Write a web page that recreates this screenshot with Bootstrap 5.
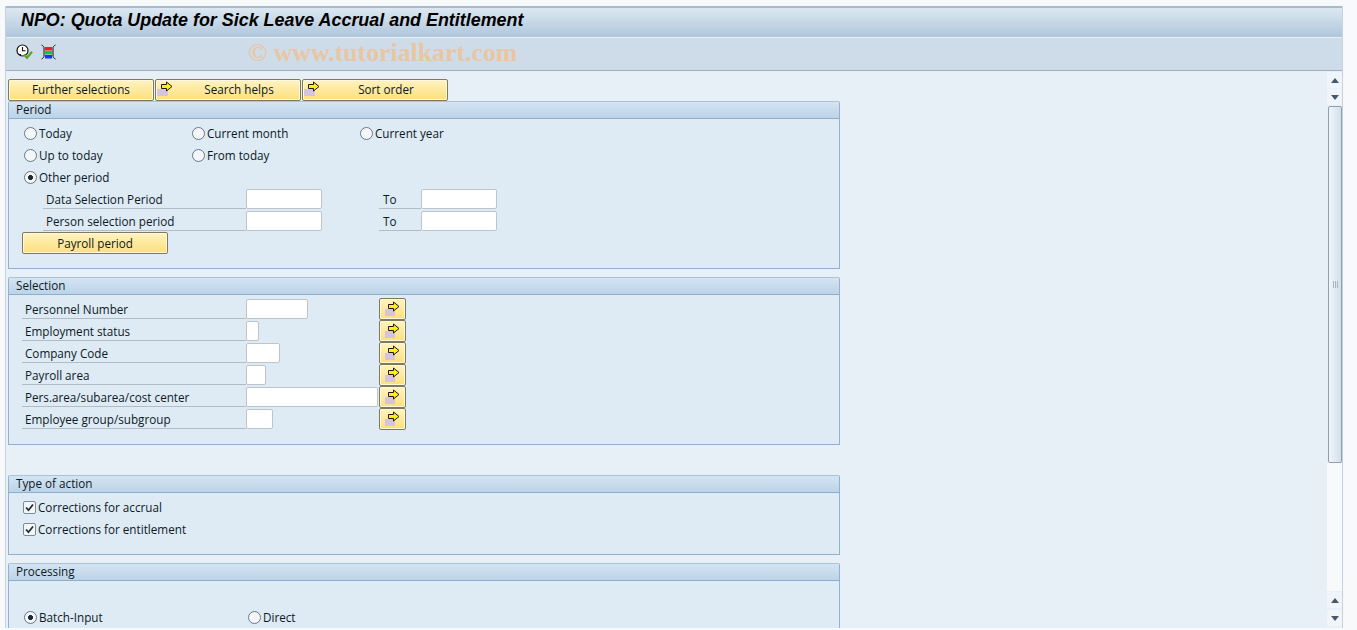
<!DOCTYPE html>
<html lang="en">
<head>
<meta charset="utf-8">
<title>NPO: Quota Update</title>
<link href="https://cdn.jsdelivr.net/npm/bootstrap@5.3.0/dist/css/bootstrap.min.css" rel="stylesheet">
<style>
html,body{height:100%;overflow:hidden}
body{background:#f7f9fb;font-family:"Open Sans","DejaVu Sans",sans-serif;font-size:11.7px;color:#0c1a26;line-height:22px}
.shell{width:1343px;height:628px;padding:6px 0 0 5px;overflow:hidden;background:#f7f9fb}
.shell-in{height:622px;border-left:1px solid #c6d1de;border-right:1px solid #c6d1de}
.title-bar{height:31px;background:linear-gradient(#dce8f1,#afc6dc);border-top:2px solid #a9bacd;padding-left:15px;font:italic bold 17.9px/25px "Liberation Sans",sans-serif;color:#000}
.tool-bar{height:34px;background:#cddce8;border-top:1px solid #eaf1f6;border-bottom:1px solid #9fb0c3;padding:6px 0 0 10px;gap:7px}
.tool-bar svg{display:block;flex:none}
.wmark{margin:-7px 0 0 185px;font:bold 25.8px/32px "Liberation Serif",serif;color:#e9c6a3}
.content{height:557px;background:#e8f0f7;overflow:hidden}
.main-col{width:1321px;flex:none;padding:8px 0 0 2px}
.top-btns{gap:1px;height:22px}
.sap-btn{--bs-btn-padding-y:0;--bs-btn-padding-x:0;--bs-btn-border-radius:2px;--bs-btn-font-size:11.7px;--bs-btn-line-height:20px;--bs-btn-color:#0c1a26;--bs-btn-hover-color:#0c1a26;--bs-btn-border-color:#7f7a5c;--bs-btn-hover-border-color:#7f7a5c;height:22px;width:146px;background:linear-gradient(#fff3c0,#fddf7b);font-family:inherit;display:flex;align-items:center;justify-content:center;position:relative;box-shadow:inset 0 0 0 1px #fff8dc;flex:none}
.sap-btn:hover{background:linear-gradient(#fff3c0,#fddf7b)}
.top-btns .sap-btn{padding-bottom:2px}
.sap-btn svg{position:absolute;left:1px;top:0}
.top-btns .ico-btn{padding-left:22px}
.sq-btn{width:27px}
.sq-btn svg{left:4px;top:1px}
.grp{width:832px;border:1px solid #92b1d2;border-top-color:#a9c3dd;background:#deeaf4;border-radius:2px 2px 0 0}
.grp-head{height:17px;background:linear-gradient(#d5e4f1,#bcd3e8);border-bottom:1px solid #8eaece;padding-left:7px;line-height:14px}
.grp-a{height:168px}
.grp-b{height:168px;margin-top:8px}
.grp-c{height:80px;margin-top:30px}
.grp-d{height:80px;margin-top:8px}
.grp-body{padding:3px 0 0 15px}
.grp-sel{padding:3px 0 0 13px}
.row-h{height:22px;display:flex;align-items:flex-start}
.cell-a{width:168px;height:22px;display:flex;align-items:center}
.cell-b{width:224px;height:22px;display:flex;align-items:center}
.cell-c{height:22px;display:flex;align-items:center}
.form-check-input.sap-radio,.form-check-input.sap-check{width:13px;height:13px;margin:0 2px 0 0;flex:none;float:none}
.form-check-input.sap-radio{border:1px solid #66788a;background-color:#f4f7fa;--bs-form-check-bg-image:none}
.form-check-input.sap-radio:checked{background-color:#f4f7fa;border-color:#66788a;background-image:radial-gradient(circle at center,#1d2a36 0,#1d2a36 2.2px,transparent 2.8px)}
.form-check-input.sap-check{border:1px solid #7b8b9b;border-radius:2px;background-color:#f4f7fa;margin-left:-1px}
.form-check-input.sap-check:checked{background-color:#f4f7fa;border-color:#7b8b9b;--bs-form-check-bg-image:url("data:image/svg+xml,%3csvg xmlns='http://www.w3.org/2000/svg' viewBox='0 0 13 13'%3e%3cpath d='M3 6.500l2.500 2.700L10 3.500' fill='none' stroke='%23222f3a' stroke-width='1.800'/%3e%3c/svg%3e");background-size:13px}
.lbl{height:21px;padding-top:1px;line-height:20px;border-bottom:1px solid #b3bcc4;flex:none}
.lbl-long{width:203px;margin-left:19px;padding-left:3px}
.lbl-to{width:42px;margin-left:57px;padding-left:4px}
.lbl-sel{width:224px;padding-left:3px}
.sap-inp.form-control{height:20px;padding:0 2px;margin-top:1px;border:1px solid #bdc5cc;border-radius:2px;background:#fff;flex:none;font-size:11px;box-shadow:none}
.w76{width:76px}.w62{width:62px}.w13{width:13px}.w34{width:34px}.w20{width:20px}.w132{width:132px}.w27{width:27px}
.pay-btn{margin-left:-2px;width:146px}
.sq-cell{margin-left:auto}
.sel-row{width:384px}
.mt-proc{padding-top:25px}
.scroll-col{width:15px;flex:none;padding:1px 0 2px;gap:1px}
.sb-btn{height:16px;background:#f1f5f9;display:flex;align-items:center;justify-content:center;flex:none}
.sb-btn-last{margin-top:1px}
.sb-thumb{height:357px;margin-left:1px;flex:none;border:1px solid #8e9fb1;border-radius:2px;background:linear-gradient(90deg,#f0f5f9,#d2e0ea);display:flex;align-items:center;justify-content:center}
.sb-track{flex:1;background:#f7f9fb;margin-top:-1px}
.grip{width:5px;height:7px;background:repeating-linear-gradient(90deg,#a9b6c2 0 1px,transparent 1px 2px)}
</style>
</head>
<body>
<div class="shell">
<div class="shell-in">
  <div class="title-bar">NPO: Quota Update for Sick Leave Accrual and Entitlement</div>
  <div class="tool-bar d-flex align-items-start">
    <svg width="18" height="16" viewBox="0 0 18 16"><circle cx="6.500" cy="6.500" r="5.500" fill="#fff" stroke="#111" stroke-width="1.200"/><path d="M6.500 3v3.800h3M3 10.500h2" fill="none" stroke="#111" stroke-width="1.100"/><path d="M8 10.500l3 3.200 5-6" fill="none" stroke="#5fa32c" stroke-width="2.300"/></svg>
    <svg width="15" height="16" viewBox="0 0 15 16"><rect x="4" y="3" width="7" height="3.500" fill="#f01c22"/><rect x="4" y="7" width="7" height="3.500" fill="#1fc04a"/><rect x="4" y="11" width="7" height="3.500" fill="#1a34f0"/><path d="M0.500 1c2 1 2.500 2 2.500 3v8c0 1-.5 2-2.500 3M14.500 1c-2 1-2.500 2-2.500 3v8c0 1 .5 2 2.500 3" fill="none" stroke="#111"/></svg>
    <div class="wmark">© www.tutorialkart.com</div>
  </div>
  <div class="content d-flex">
    <div class="main-col">
      <div class="top-btns d-flex">
        <button type="button" class="btn sap-btn">Further selections</button>
        <button type="button" class="btn sap-btn ico-btn"><svg width="18" height="18" viewBox="0 0 18 18"><rect x="0" y="9" width="11" height="7" fill="#d6c4dc"/><path d="M4.500 4.500h5V2l5.500 4.500L9.500 11V8.500h-5z" fill="#fff200" stroke="#1a1a1a"/></svg>Search helps</button>
        <button type="button" class="btn sap-btn ico-btn"><svg width="18" height="18" viewBox="0 0 18 18"><rect x="0" y="9" width="11" height="7" fill="#d6c4dc"/><path d="M4.500 4.500h5V2l5.500 4.500L9.500 11V8.500h-5z" fill="#fff200" stroke="#1a1a1a"/></svg>Sort order</button>
      </div>

      <section class="grp grp-a">
        <div class="grp-head">Period</div>
        <div class="grp-body">
          <div class="row-h"><div class="cell-a"><input class="form-check-input sap-radio" type="radio" name="p">Today</div><div class="cell-a"><input class="form-check-input sap-radio" type="radio" name="p">Current month</div><div class="cell-a"><input class="form-check-input sap-radio" type="radio" name="p">Current year</div></div>
          <div class="row-h"><div class="cell-a"><input class="form-check-input sap-radio" type="radio" name="p">Up to today</div><div class="cell-a"><input class="form-check-input sap-radio" type="radio" name="p">From today</div></div>
          <div class="row-h"><div class="cell-a"><input class="form-check-input sap-radio" type="radio" name="p" checked>Other period</div></div>
          <div class="row-h"><div class="lbl lbl-long">Data Selection Period</div><input class="form-control sap-inp w76" aria-label="Data from"><div class="lbl lbl-to">To</div><input class="form-control sap-inp w76" aria-label="Data to"></div>
          <div class="row-h"><div class="lbl lbl-long">Person selection period</div><input class="form-control sap-inp w76" aria-label="Person from"><div class="lbl lbl-to">To</div><input class="form-control sap-inp w76" aria-label="Person to"></div>
          <div class="row-h"><button type="button" class="btn sap-btn pay-btn">Payroll period</button></div>
        </div>
      </section>

      <section class="grp grp-b">
        <div class="grp-head">Selection</div>
        <div class="grp-sel">
          <div class="row-h sel-row"><div class="lbl lbl-sel">Personnel Number</div><input class="form-control sap-inp w62" aria-label="Personnel Number"><button type="button" class="btn sap-btn sq-btn sq-cell" aria-label="Multiple selection"><svg width="18" height="18" viewBox="0 0 18 18"><rect x="1" y="9" width="10" height="7" fill="#d6c4dc"/><path d="M4.500 4.500h5V2l5.500 4.500L9.500 11V8.500h-5z" fill="#fff200" stroke="#1a1a1a"/></svg></button></div>
          <div class="row-h sel-row"><div class="lbl lbl-sel">Employment status</div><input class="form-control sap-inp w13" aria-label="Employment status"><button type="button" class="btn sap-btn sq-btn sq-cell" aria-label="Multiple selection"><svg width="18" height="18" viewBox="0 0 18 18"><rect x="1" y="9" width="10" height="7" fill="#d6c4dc"/><path d="M4.500 4.500h5V2l5.500 4.500L9.500 11V8.500h-5z" fill="#fff200" stroke="#1a1a1a"/></svg></button></div>
          <div class="row-h sel-row"><div class="lbl lbl-sel">Company Code</div><input class="form-control sap-inp w34" aria-label="Company Code"><button type="button" class="btn sap-btn sq-btn sq-cell" aria-label="Multiple selection"><svg width="18" height="18" viewBox="0 0 18 18"><rect x="1" y="9" width="10" height="7" fill="#d6c4dc"/><path d="M4.500 4.500h5V2l5.500 4.500L9.500 11V8.500h-5z" fill="#fff200" stroke="#1a1a1a"/></svg></button></div>
          <div class="row-h sel-row"><div class="lbl lbl-sel">Payroll area</div><input class="form-control sap-inp w20" aria-label="Payroll area"><button type="button" class="btn sap-btn sq-btn sq-cell" aria-label="Multiple selection"><svg width="18" height="18" viewBox="0 0 18 18"><rect x="1" y="9" width="10" height="7" fill="#d6c4dc"/><path d="M4.500 4.500h5V2l5.500 4.500L9.500 11V8.500h-5z" fill="#fff200" stroke="#1a1a1a"/></svg></button></div>
          <div class="row-h sel-row"><div class="lbl lbl-sel">Pers.area/subarea/cost center</div><input class="form-control sap-inp w132" aria-label="Pers.area"><button type="button" class="btn sap-btn sq-btn sq-cell" aria-label="Multiple selection"><svg width="18" height="18" viewBox="0 0 18 18"><rect x="1" y="9" width="10" height="7" fill="#d6c4dc"/><path d="M4.500 4.500h5V2l5.500 4.500L9.500 11V8.500h-5z" fill="#fff200" stroke="#1a1a1a"/></svg></button></div>
          <div class="row-h sel-row"><div class="lbl lbl-sel">Employee group/subgroup</div><input class="form-control sap-inp w27" aria-label="Employee group"><button type="button" class="btn sap-btn sq-btn sq-cell" aria-label="Multiple selection"><svg width="18" height="18" viewBox="0 0 18 18"><rect x="1" y="9" width="10" height="7" fill="#d6c4dc"/><path d="M4.500 4.500h5V2l5.500 4.500L9.500 11V8.500h-5z" fill="#fff200" stroke="#1a1a1a"/></svg></button></div>
        </div>
      </section>

      <section class="grp grp-c">
        <div class="grp-head">Type of action</div>
        <div class="grp-body">
          <div class="row-h"><div class="cell-c"><input class="form-check-input sap-check" type="checkbox" checked>Corrections for accrual</div></div>
          <div class="row-h"><div class="cell-c"><input class="form-check-input sap-check" type="checkbox" checked>Corrections for entitlement</div></div>
        </div>
      </section>

      <section class="grp grp-d">
        <div class="grp-head">Processing</div>
        <div class="grp-body mt-proc">
          <div class="row-h"><div class="cell-b"><input class="form-check-input sap-radio" type="radio" name="q" checked>Batch-Input</div><div class="cell-b"><input class="form-check-input sap-radio" type="radio" name="q">Direct</div></div>
        </div>
      </section>
    </div>
    <div class="scroll-col d-flex flex-column">
      <div class="sb-btn"><svg width="8" height="5" viewBox="0 0 10 6" preserveAspectRatio="none"><path d="M5 0l5 6H0z" fill="#46586c"/></svg></div>
      <div class="sb-btn"><svg width="8" height="5" viewBox="0 0 10 6" preserveAspectRatio="none"><path d="M0 0h10L5 6z" fill="#46586c"/></svg></div>
      <div class="sb-thumb"><div class="grip"></div></div>
      <div class="sb-track"></div>
      <div class="sb-btn"><svg width="8" height="5" viewBox="0 0 10 6" preserveAspectRatio="none"><path d="M5 0l5 6H0z" fill="#46586c"/></svg></div>
      <div class="sb-btn sb-btn-last"><svg width="8" height="5" viewBox="0 0 10 6" preserveAspectRatio="none"><path d="M0 0h10L5 6z" fill="#46586c"/></svg></div>
    </div>
  </div>
</div>
</div>
<script src="https://cdn.jsdelivr.net/npm/bootstrap@5.3.0/dist/js/bootstrap.bundle.min.js"></script>
</body>
</html>
